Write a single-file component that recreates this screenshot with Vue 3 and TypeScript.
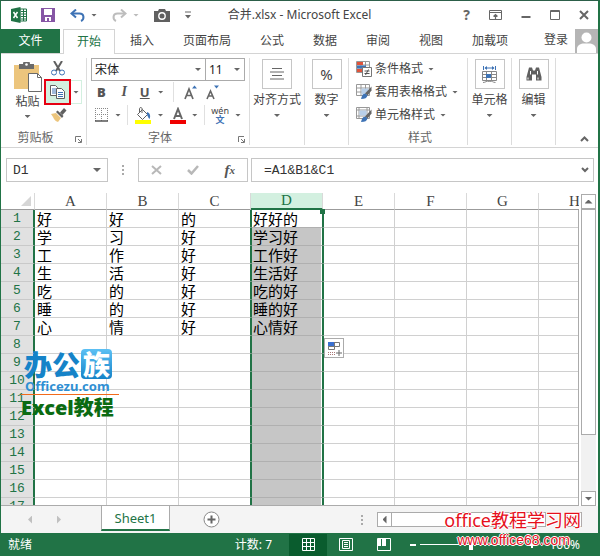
<script setup lang="ts">
import { ref } from 'vue'

const tabs = ['开始', '插入', '页面布局', '公式', '数据', '审阅', '视图', '加载项']
const activeTab = ref('开始')

const columns = ['A', 'B', 'C', 'D', 'E', 'F', 'G', 'H']
const selected = 3
const rows: string[][] = [
  ['好', '好', '的', '好好的'],
  ['学', '习', '好', '学习好'],
  ['工', '作', '好', '工作好'],
  ['生', '活', '好', '生活好'],
  ['吃', '的', '好', '吃的好'],
  ['睡', '的', '好', '睡的好'],
  ['心', '情', '好', '心情好'],
]
const rowCount = 17

const cell = (r: number, c: number): string => rows[r - 1]?.[c] ?? ''

const columnClass = (c: number) => ({
  before: c === selected - 1,
  sel: c === selected,
  after: c === selected + 1,
})

const formula = ref('=A1&B1&C1')
const cellName = ref('D1')
const zoom = ref(50)
</script>

<template>
  <div class="window">
    <header class="titlebar">
      <div class="quick">
        <svg class="logo" width="16" height="16" viewBox="0 0 16 16">
          <path d="M9 2h6.500v12H9z" fill="#fff" stroke="#217346" />
          <path d="M10 4.500h5M10 7h5M10 9.500h5M10 12h5M12.500 2v12" stroke="#217346" />
          <path d="M0 2l9.500-2v16L0 14z" fill="#217346" />
          <path d="M2.500 5l4 6M6.500 5l-4 6" stroke="#fff" stroke-width="1.500" />
        </svg>
        <button class="plain save" aria-label="保存">
          <svg width="14" height="14" viewBox="0 0 14 14">
            <path d="M0 0h14v14H0z" fill="#8656a5" />
            <path d="M3 1h8v6H3zM4 9h6v4H8v-3H6v3H4z" fill="#fff" />
          </svg>
        </button>
        <button class="plain undo" aria-label="撤消">
          <svg width="15" height="13" viewBox="0 0 15 13">
            <path d="M2 4.500h7.500c5 0 5 6 1.500 7.500" fill="none" stroke="#3e73b5" stroke-width="2" />
            <path d="M6 0.500L1.500 4.500 6 8.500" fill="none" stroke="#3e73b5" stroke-width="2" />
          </svg>
          <i class="caret"></i>
        </button>
        <button class="plain redo" aria-label="恢复">
          <svg width="15" height="13" viewBox="0 0 15 13">
            <path d="M13 4.500H5.500c-5 0-5 6-1.500 7.500" fill="none" stroke="#bdbdbd" stroke-width="2" />
            <path d="M9 0.500l4.500 4L9 8.500" fill="none" stroke="#bdbdbd" stroke-width="2" />
          </svg>
          <i class="caret pale"></i>
        </button>
        <button class="plain" aria-label="照相机">
          <svg width="16" height="13" viewBox="0 0 16 13">
            <path d="M0 2h4l1-2h6l1 2h4v11H0z" fill="#606060" />
            <circle cx="8" cy="7" r="3.200" fill="none" stroke="#fff" stroke-width="1.400" />
          </svg>
        </button>
        <button class="plain" aria-label="自定义快速访问工具栏">
          <svg width="6" height="8" viewBox="0 0 6 8">
            <path d="M0 1h6" stroke="#666" stroke-width="1" />
            <path d="M0 4h6L3 7.500z" fill="#666" />
          </svg>
        </button>
      </div>
      <h1>合并.xlsx - Microsoft Excel</h1>
      <div class="controls">
        <button class="plain help" aria-label="帮助">?</button>
        <button class="plain" aria-label="功能区显示选项">
          <svg width="13" height="10" viewBox="0 0 13 10">
            <path d="M0.500 0.500h12v9H0.500zM0.500 2.500h12" fill="none" stroke="#666" />
            <path d="M6.500 9V4.500M4.500 6.500l2-2 2 2" fill="none" stroke="#666" stroke-width="1.200" />
          </svg>
        </button>
        <button class="plain" aria-label="最小化">
          <svg width="10" height="10" viewBox="0 0 10 10"><path d="M0.500 7h9" stroke="#666" stroke-width="2" /></svg>
        </button>
        <button class="plain" aria-label="最大化">
          <svg width="10" height="10" viewBox="0 0 10 10"><path d="M0.500 0.500h9v9h-9zM0.500 1.500h9" fill="none" stroke="#666" /></svg>
        </button>
        <button class="plain" aria-label="关闭">
          <svg width="10" height="10" viewBox="0 0 10 10"><path d="M1 1l8 8M9 1L1 9" stroke="#666" stroke-width="2" /></svg>
        </button>
      </div>
    </header>

    <nav class="tabs">
      <button class="tab file">文件</button>
      <button
        v-for="t in tabs"
        :key="t"
        class="tab"
        :class="{ active: t === activeTab }"
        @click="activeTab = t"
      >{{ t }}</button>
      <button class="tab login">登录</button>
      <svg class="avatar" width="23" height="24" viewBox="0 0 23 24">
        <path d="M0 0h23v24H0z" fill="#b5b5b5" />
        <circle cx="11.500" cy="8.500" r="5" fill="#fff" />
        <path d="M2 24v-4c0-4 4-5.500 7-5.500h5c3 0 7 1.500 7 5.500v4z" fill="#fff" />
      </svg>
    </nav>

    <section class="ribbon">
      <div class="group clipboard">
        <div class="body">
          <button class="paste">
            <svg width="28" height="30" viewBox="0 0 28 30">
              <path d="M0 3h25v24H0z" fill="#ecc57d" />
              <path d="M5 2h4a3.500 3.500 0 0 1 7 0h4v5H5z" fill="#6a6a6a" />
              <circle cx="12.500" cy="2.500" r="1.300" fill="#fff" />
              <path d="M14.500 11.500h9l4 4v14h-13z" fill="#fff" stroke="#6a6a6a" />
              <path d="M23.500 11.500v4h4" fill="none" stroke="#6a6a6a" />
            </svg>
            <span>粘贴</span>
            <i class="caret"></i>
          </button>
          <div class="clip-tools">
            <button class="plain" aria-label="剪切">
              <svg width="14" height="15" viewBox="0 0 14 15">
                <path d="M3 0l6 10M11 0L5 10" stroke="#606060" stroke-width="2" />
                <circle cx="3" cy="11.500" r="2.500" fill="#fff" stroke="#3e73b5" />
                <circle cx="11" cy="11.500" r="2.500" fill="#fff" stroke="#3e73b5" />
              </svg>
            </button>
            <div class="copy-row">
              <button class="copy" aria-label="复制">
                <svg width="15" height="14" viewBox="0 0 15 14">
                  <path d="M0.500 0.500h5l2 2v8h-7z" fill="#fff" stroke="#606060" />
                  <path d="M2 4h4M2 6h4M2 8h4" stroke="#3e73b5" />
                  <path d="M6.500 3.500h5l3 3v7h-8z" fill="#fff" stroke="#606060" />
                  <path d="M8 7.500h5M8 9.500h5M8 11.500h5" stroke="#3e73b5" />
                </svg>
              </button>
              <button class="copy-more" aria-label="复制选项"><i class="caret"></i></button>
            </div>
            <button class="plain" aria-label="格式刷">
              <svg width="16" height="14" viewBox="0 0 16 14">
                <path d="M0 6l5-1 5 5-3 4c-3-1-3-2-4-3l-1-2z" fill="#ecc57d" />
                <path d="M5 4l6 6 1.500-2-6-5.500z" fill="#606060" />
                <path d="M9 4.500L13 0l2.500 2.500L11.500 7z" fill="#606060" />
              </svg>
            </button>
          </div>
        </div>
        <footer>剪贴板<svg class="launch" width="7" height="7" viewBox="0 0 7 7"><path d="M0.500 6V0.500H6M3 3l3 3M6.500 3v3.500H3" fill="none" stroke="#777" /></svg></footer>
      </div>

      <div class="group font">
        <div class="body">
          <div class="combos">
            <label class="combo family">
              <select aria-label="字体"><option>宋体</option></select><i class="caret"></i>
            </label>
            <label class="combo size">
              <select aria-label="字号"><option>11</option></select><i class="caret"></i>
            </label>
          </div>
          <div class="tools">
            <button class="plain letter" aria-label="加粗"><b>B</b></button>
            <button class="plain letter" aria-label="倾斜"><em>I</em></button>
            <button class="plain letter" aria-label="下划线"><u>U</u><i class="caret"></i></button>
            <span class="rule"></span>
            <button class="plain" aria-label="增大字号">
              <svg width="13" height="15" viewBox="0 0 13 15">
                <path d="M1 14L5 4l4 10M2.500 10.500h5" fill="none" stroke="#666" stroke-width="1.700" />
                <path d="M8 3.500L10.500 0.500 13 3.500z" fill="#3e73b5" />
              </svg>
            </button>
            <button class="plain" aria-label="减小字号">
              <svg width="13" height="15" viewBox="0 0 13 15">
                <path d="M1 14l3.500-8L8 14M2.500 11h4" fill="none" stroke="#666" stroke-width="1.600" />
                <path d="M8 0.500L10.500 3.500 13 0.500z" fill="#3e73b5" />
              </svg>
            </button>
          </div>
          <div class="tools second">
            <button class="plain" aria-label="边框">
              <svg width="14" height="14" viewBox="0 0 14 14">
                <path d="M0.500 0v13M6.500 0v13M12.500 0v13M0 0.500h13M0 6.500h13" stroke="#888" stroke-dasharray="1 1" />
                <path d="M0 13h13" stroke="#555" stroke-width="1.500" />
              </svg><i class="caret"></i>
            </button>
            <span class="rule"></span>
            <button class="plain" aria-label="填充颜色">
              <svg width="17" height="17" viewBox="0 0 17 17">
                <path d="M7.500 2.500l5 5-5 5-5-5zM7 6V1.500a1.300 1.300 0 0 0-2.500 0V5" fill="#fff" stroke="#606060" />
                <path d="M12 5c3 1 4 4 2.500 7-1.500-1-1.500-3-2.500-4z" fill="#3e73b5" />
                <path d="M0 13h16v4H0z" fill="#ffff00" />
              </svg><i class="caret"></i>
            </button>
            <button class="plain" aria-label="字体颜色">
              <svg width="16" height="17" viewBox="0 0 16 17">
                <path d="M4 12L8 2l4 10M5.500 9h5" fill="none" stroke="#666" stroke-width="2" />
                <path d="M0 13h16v4H0z" fill="#f00000" />
              </svg><i class="caret"></i>
            </button>
            <span class="rule"></span>
            <button class="plain" aria-label="拼音"><span class="pinyin">wén<b>文</b></span><i class="caret"></i></button>
          </div>
        </div>
        <footer>字体<svg class="launch" width="7" height="7" viewBox="0 0 7 7"><path d="M0.500 6V0.500H6M3 3l3 3M6.500 3v3.500H3" fill="none" stroke="#777" /></svg></footer>
      </div>

      <div class="group big align">
        <button class="large">
          <span class="frame">
            <svg width="14" height="12" viewBox="0 0 14 12"><path d="M2 0.500h10M0 4h14M2 7.500h10M0 11h14" stroke="#666" /></svg>
          </span>
          <span>对齐方式</span><i class="caret"></i>
        </button>
      </div>
      <div class="group big number">
        <button class="large"><span class="frame percent">%</span><span>数字</span><i class="caret"></i></button>
      </div>

      <div class="group styles">
        <div class="body">
          <button class="wide">
            <svg width="16" height="16" viewBox="0 0 16 16">
              <path d="M0.500 0.500h13v11H0.500zM0.500 4h13M0.500 8h13M5 0.500v11M9.500 0.500v11" fill="#fff" stroke="#999" />
              <path d="M1 1h6v3H1zM1 8h5v3H1z" fill="#e0533a" /><path d="M1 4.500h9v3H1z" fill="#3e73b5" />
              <path d="M6.500 6.500h9v9h-9z" fill="#fff" stroke="#777" />
              <path d="M8.500 10h5M8.500 12.500h5M12.500 8.500l-3 5.500" stroke="#555" />
            </svg>条件格式<i class="caret"></i>
          </button>
          <button class="wide">
            <svg width="16" height="16" viewBox="0 0 16 16">
              <path d="M0.500 0.500h13v11H0.500zM0.500 4h13M0.500 8h13M5 0.500v11M9.500 0.500v11" fill="#fff" stroke="#999" />
              <path d="M5.500 4.500h7v6h-7z" fill="#b9d0ea" />
              <path d="M15.500 2.500v4l-4 5-2.500-2z" fill="#666" /><path d="M5 15c1-5 3-6 5-5l1.500 1.500C11 14 9 15 5 15z" fill="#3e73b5" />
            </svg>套用表格格式<i class="caret"></i>
          </button>
          <button class="wide">
            <svg width="16" height="16" viewBox="0 0 16 16">
              <path d="M0.500 0.500h13v11H0.500zM0.500 3h13M0.500 9h13M3 0.500v11M11 0.500v11" fill="#fff" stroke="#999" />
              <path d="M3.500 3.500h7v5h-7z" fill="#b9d0ea" />
              <path d="M15.500 2.500v4l-4 5-2.500-2z" fill="#666" /><path d="M5 15c1-5 3-6 5-5l1.500 1.500C11 14 9 15 5 15z" fill="#3e73b5" />
            </svg>单元格样式<i class="caret"></i>
          </button>
        </div>
        <footer>样式</footer>
      </div>

      <div class="group big cells">
        <button class="large">
          <span class="frame">
            <svg width="16" height="17" viewBox="0 0 16 17">
              <path d="M1.500 0v4M13.500 0v4M3 2h9" stroke="#3e73b5" /><path d="M5 0L2.500 2 5 4zM10 0l2.500 2L10 4z" fill="#3e73b5" />
              <path d="M0.500 5.500h14v9H0.500zM0.500 8.500h14M0.500 11.500h14M4.500 5.500v9M9.500 5.500v9" fill="#fff" stroke="#888" />
              <path d="M4 8h5v4H4z" fill="#3e73b5" /><path d="M1 16.500c3 0 3-2 6.500-1 3-1 3 1 6 1" fill="none" stroke="#888" />
            </svg>
          </span>
          <span>单元格</span><i class="caret"></i>
        </button>
      </div>
      <div class="group big edit">
        <button class="large">
          <span class="frame">
            <svg width="16" height="14" viewBox="0 0 16 14">
              <path d="M3 0.500h3l1 3h2l1-3h3l2.500 9.500v3.500h-5.500V7.500H6v6H0.500V10z" fill="#606060" />
              <path d="M2 10.500v2M4.500 4v3.500M11.500 4v3.500M12 10.500v2" stroke="#fff" />
            </svg>
          </span>
          <span>编辑</span><i class="caret"></i>
        </button>
      </div>
      <button class="plain collapse" aria-label="折叠功能区">
        <svg width="9" height="6" viewBox="0 0 9 6"><path d="M1 5l3.500-3.500L8 5" fill="none" stroke="#666" stroke-width="2" /></svg>
      </button>
    </section>

    <section class="formula-bar">
      <label class="box name"><input v-model="cellName" aria-label="名称框" /><i class="caret wide-caret"></i></label>
      <span class="dots"><i></i><i></i><i></i></span>
      <div class="box actions">
        <button class="plain" aria-label="取消"><svg width="11" height="10" viewBox="0 0 11 10"><path d="M1 1l9 8M10 1L1 9" stroke="#b8b8b8" stroke-width="2" /></svg></button>
        <button class="plain" aria-label="输入"><svg width="12" height="10" viewBox="0 0 12 10"><path d="M1 5l3.500 3.500L11 1" fill="none" stroke="#b8b8b8" stroke-width="2.500" /></svg></button>
        <button class="plain fx" aria-label="插入函数">f<sub>x</sub></button>
      </div>
      <div class="box entry">
        <input v-model="formula" aria-label="编辑栏" />
        <button class="plain" aria-label="展开编辑栏"><svg width="8" height="6" viewBox="0 0 8 6"><path d="M1 1l3 3 3-3" fill="none" stroke="#666" stroke-width="2" /></svg></button>
      </div>
    </section>

    <main class="sheet">
      <div class="grid">
        <table>
          <colgroup><col class="row-col" /><col v-for="c in columns" :key="c" class="data-col" /></colgroup>
          <thead>
            <tr>
              <th class="corner"><svg width="10" height="10" viewBox="0 0 10 10"><path d="M10 0v10H0z" fill="#d6d6d6" /></svg></th>
              <th v-for="(c, i) in columns" :key="c" :class="{ sel: i === selected }">{{ c }}</th>
            </tr>
          </thead>
          <tbody>
            <tr v-for="r in rowCount" :key="r">
              <th>{{ r }}</th>
              <td v-for="(c, i) in columns" :key="c" :class="columnClass(i)">{{ cell(r, i) }}</td>
            </tr>
          </tbody>
        </table>
        <span class="handle"></span>
        <button class="fill-options" aria-label="自动填充选项">
          <svg width="15" height="15" viewBox="0 0 15 15">
            <path d="M1.500 1.500h11v4h-11zM1.500 5.500h6v3h-6zM7.500 1.500v4" fill="#fff" stroke="#777" />
            <path d="M1 1h6v4H1z" fill="#3a6fd0" />
            <path d="M1 11.500h7M1 13.500h7" stroke="#a77" stroke-dasharray="1 1" />
            <path d="M12 9v6M9 12h6" stroke="#666" />
          </svg>
        </button>
        <aside class="mark">
          <div class="mark-name">办公<span>族</span></div>
          <div class="mark-site">Officezu.com</div>
          <div class="mark-course">Excel教程</div>
        </aside>
      </div>
      <div class="vscroll">
        <button aria-label="向上滚动"><i class="tri up"></i></button>
        <div class="vthumb"></div>
        <div class="vrest"></div>
        <button aria-label="向下滚动"><i class="tri down"></i></button>
      </div>
    </main>

    <section class="sheet-bar">
      <button class="plain" aria-label="上一工作表"><i class="tri left pale"></i></button>
      <button class="plain next" aria-label="下一工作表"><i class="tri right pale"></i></button>
      <button class="sheet-tab">Sheet1</button>
      <button class="plain add" aria-label="新工作表">
        <svg width="17" height="17" viewBox="0 0 17 17">
          <circle cx="8.500" cy="8.500" r="7.500" fill="#fff" stroke="#888" /><path d="M8.500 4.500v8M4.500 8.500h8" stroke="#666" stroke-width="2" />
        </svg>
      </button>
      <span class="dots"><i></i><i></i><i></i></span>
      <div class="hscroll">
        <button aria-label="向左滚动"><i class="tri left"></i></button>
        <div class="hthumb"></div>
        <div class="hrest"></div>
        <button aria-label="向右滚动"><i class="tri right"></i></button>
      </div>
    </section>

    <footer class="status">
      <span>就绪</span>
      <span class="count">计数: 7</span>
      <button class="view on" aria-label="普通">
        <svg width="13" height="13" viewBox="0 0 13 13"><path d="M0.500 0.500h12v12H0.500zM0.500 4.500h12M0.500 8.500h12M4.500 0.500v12M8.500 0.500v12" fill="none" stroke="#fff" /></svg>
      </button>
      <button class="view" aria-label="页面布局">
        <svg width="14" height="13" viewBox="0 0 14 13"><path d="M0.500 0.500h13v12H0.500zM3.500 2.500h7v8h-7zM5 4.500h4M5 6.500h4M5 8.500h4" fill="none" stroke="#fff" /></svg>
      </button>
      <button class="view" aria-label="分页预览">
        <svg width="14" height="13" viewBox="0 0 14 13"><path d="M0.500 0.500h13v12H0.500z" fill="none" stroke="#fff" /><path d="M1 1h3v7H1zM5 1h4v7H5z" fill="#fff" /></svg>
      </button>
      <button class="step" aria-label="缩小"><svg width="8" height="8" viewBox="0 0 8 8"><path d="M1 4h6" stroke="#fff" stroke-width="2" /></svg></button>
      <input v-model="zoom" class="zoom" type="range" min="0" max="100" aria-label="显示比例" />
      <button class="step" aria-label="放大"><svg width="8" height="8" viewBox="0 0 8 8"><path d="M1 4h6M4 1v6" stroke="#fff" stroke-width="2" /></svg></button>
      <span class="level">100%</span>
    </footer>

    <aside class="site">
      <div class="site-name">office教程学习网</div>
      <div class="site-url">www.office68.com</div>
    </aside>
  </div>
</template>

<style>
body {
  margin: 0;
}
</style>

<style scoped>
.window {
  position: relative;
  display: flex;
  flex-direction: column;
  box-sizing: border-box;
  height: 100vh;
  border: 1px solid #217346;
  border-top-color: #2c5f49;
  border-right-width: 2px;
  border-bottom: 0;
  background: #fff;
  color: #444;
  font: 12px/16px "Noto Sans", "Noto Sans CJK SC", sans-serif;
  overflow: hidden;
}
.window *,
.window *::before,
.window *::after {
  box-sizing: border-box;
}
button,
input,
select {
  margin: 0;
  padding: 0;
  border: 0;
  background: none;
  color: inherit;
  font: inherit;
}
svg {
  display: block;
  flex: none;
}
.plain {
  display: flex;
  align-items: center;
}
.caret {
  flex: none;
  width: 6px;
  height: 3px;
  background: #666;
  clip-path: polygon(0 0, 100% 0, 50% 100%);
}
.caret.pale {
  background: #bbb;
}
.caret.wide-caret {
  width: 8px;
  height: 4px;
}

/* title bar */
.titlebar {
  display: grid;
  grid-template-columns: 1fr auto 1fr;
  align-items: center;
  height: 28px;
  flex: none;
}
.quick {
  display: flex;
  align-items: center;
  padding-left: 10px;
  gap: 15px;
}
.logo {
  margin-right: -1px;
}
.undo,
.redo {
  gap: 6px;
}
h1 {
  margin: 0;
  font-size: 12px;
  font-weight: 400;
}
.controls {
  display: flex;
  align-items: center;
  justify-content: flex-end;
  gap: 19px;
  padding-right: 9px;
}
.help {
  color: #666;
  font-weight: 700;
  font-size: 14px;
}

/* tabs */
.tabs {
  display: flex;
  gap: 1px;
  height: 25px;
  flex: none;
  border-bottom: 1px solid #d4d4d4;
}
.tab {
  height: 24px;
  padding: 0 14px;
}
.tab.file {
  width: 59px;
  margin-right: 2px;
  background: #217346;
  color: #fff;
}
.tab.active {
  height: 25px;
  padding: 0 13px;
  border: 1px solid #d4d4d4;
  border-bottom: 0;
  background: #fff;
  color: #217346;
}
.tab.login {
  margin-left: auto;
  padding: 0 6px 2px;
}

/* ribbon */
.ribbon {
  display: flex;
  height: 94px;
  flex: none;
  padding: 4px 0 2px;
  border-bottom: 1px solid #d4d4d4;
}
.group {
  display: flex;
  flex-direction: column;
  justify-content: space-between;
  border-right: 1px solid #dcdcdc;
}
.group .body {
  height: 72px;
}
.group footer {
  position: relative;
  color: #666;
  text-align: center;
  height: 15px;
  line-height: 15px;
}
.launch {
  position: absolute;
  right: 4px;
  bottom: 2px;
}
.clipboard {
  width: 86px;
}
.clipboard .body {
  display: flex;
  gap: 2px;
  padding-left: 12px;
}
.clipboard footer {
  padding-right: 16px;
}
.paste {
  display: flex;
  flex-direction: column;
  align-items: center;
  width: 29px;
  padding-top: 4px;
}
.paste span {
  padding-top: 2px;
  white-space: nowrap;
}
.paste .caret {
  margin-top: 5px;
}
.clip-tools {
  display: flex;
  flex-direction: column;
  gap: 3px;
  padding-top: 3px;
}
.clip-tools > .plain {
  margin-left: 7px;
}
.copy-row {
  display: flex;
}
.copy {
  display: flex;
  align-items: center;
  justify-content: center;
  width: 27px;
  height: 26px;
  border: 2px solid #e60012;
  background: #d3f0e0;
}
.copy-more {
  display: flex;
  align-items: center;
  width: 11px;
  margin: 1px 0;
  padding-left: 2px;
  border: 1px solid #d3f0e0;
  border-left: 0;
}
.font {
  width: 163px;
}
.font .body {
  padding-left: 4px;
}
.font footer {
  padding-right: 16px;
}
.combos {
  display: flex;
}
.combo {
  display: flex;
  align-items: center;
  height: 23px;
  border: 1px solid #ababab;
  color: #222;
}
.combo.family {
  width: 115px;
}
.combo.size {
  width: 40px;
  margin-left: -1px;
}
.combo select {
  appearance: none;
  flex: 1;
  min-width: 0;
  height: 100%;
  padding-left: 3px;
}
.combo .caret {
  margin-right: 4px;
}
.tools {
  display: flex;
  align-items: center;
  justify-content: space-between;
  height: 22px;
  padding: 0 30px 0 6px;
}
.tools .plain {
  gap: 6px;
}
.tools .letter {
  gap: 8px;
  min-width: 12px;
  color: #555;
  font-size: 13px;
  font-weight: 700;
}
.tools.second {
  height: 24px;
  padding: 0 8px 0 4px;
}
.rule {
  width: 1px;
  height: 20px;
  background: #e0e0e0;
}
.letter em {
  padding-left: 3px;
  font-family: "Liberation Serif", serif;
  font-size: 14px;
}
.pinyin {
  display: flex;
  flex-direction: column;
  align-items: center;
  font-size: 9px;
  line-height: 9px;
}
.pinyin b {
  color: #3e73b5;
}
.big.align {
  width: 55px;
}
.big {
  width: 44px;
}
.large {
  display: flex;
  flex-direction: column;
  align-items: center;
  padding-top: 1px;
  white-space: nowrap;
}
.frame {
  display: flex;
  align-items: center;
  justify-content: center;
  width: 30px;
  height: 30px;
  margin-bottom: 3px;
  border: 1px solid #c6c6c6;
}
.percent {
  font-size: 15px;
}
.large .caret {
  margin-top: 6px;
}
.styles {
  width: 119px;
}
.styles .body {
  display: flex;
  flex-direction: column;
  gap: 7px;
  padding: 3px 0 0 7px;
}
.styles footer {
  padding-left: 24px;
}
.wide {
  display: flex;
  align-items: center;
  height: 16px;
  white-space: nowrap;
}
.wide svg {
  margin-right: 3px;
}
.wide .caret {
  margin-left: 5px;
}
.collapse {
  align-self: flex-end;
  margin: 0 9px 3px auto;
}

/* formula bar */
.formula-bar {
  display: flex;
  flex: none;
  padding: 10px 4px 11px 5px;
  color: #333;
}
.box {
  display: flex;
  align-items: center;
  height: 24px;
  border: 1px solid #c6c6c6;
}
.box input {
  flex: 1;
  min-width: 0;
  padding-top: 2px;
  font: 13px/16px "Liberation Mono", monospace;
}
.name {
  width: 102px;
  padding: 0 6px;
}
.dots {
  display: flex;
  flex-direction: column;
  justify-content: center;
  gap: 2px;
  width: 30px;
  align-items: center;
}
.dots i {
  width: 2px;
  height: 2px;
  background: #aaa;
}
.actions {
  width: 110px;
  margin-right: 3px;
  padding: 0 12px;
  justify-content: space-between;
}
.fx {
  color: #555;
  font: italic 700 15px/16px "Liberation Serif", serif;
}
.fx sub {
  font-size: 11px;
  vertical-align: baseline;
}
.entry {
  flex: 1;
  padding: 0 4px 0 12px;
}

/* worksheet */
.sheet {
  display: flex;
  flex: 1;
  min-height: 0;
  gap: 2px;
  padding-right: 2px;
}
.grid {
  position: relative;
  flex: 1;
  min-width: 0;
  overflow: hidden;
  border-bottom: 1px solid #ababab;
}
.grid::after {
  content: "";
  position: absolute;
  top: 17px;
  right: 0;
  bottom: 0;
  width: 1px;
  background: #ababab;
}
table {
  table-layout: fixed;
  width: 610px;
  border-collapse: separate;
  border-spacing: 0;
}
.row-col {
  width: 34px;
}
.data-col {
  width: 72px;
}
th,
td {
  padding: 0;
  white-space: nowrap;
}
thead th {
  height: 17px;
  border-right: 1px solid #d9d9d9;
  border-bottom: 1px solid #9b9b9b;
  font: 15px/16px "Liberation Serif", serif;
  color: #444;
}
thead th.corner {
  padding: 0 3px 1px 20px;
}
thead th.sel {
  border-bottom: 2px solid #217346;
  background: #d3f0e0;
  color: #217346;
  line-height: 15px;
}
tbody th {
  height: 18px;
  border-right: 2px solid #217346;
  border-bottom: 1px solid #c9c9c9;
  background: #e1e1e1;
  color: #217346;
  font: 13px/17px "Liberation Mono", monospace;
}
td {
  height: 18px;
  padding-left: 2px;
  border-right: 1px solid #d0d0d0;
  border-bottom: 1px solid #d0d0d0;
  color: #000;
  font: 15px/17px "Noto Sans CJK SC", sans-serif;
}
td.before {
  border-right-color: #217346;
}
td.sel {
  padding-left: 1px;
  border-left: 1px solid #217346;
  border-right-color: #217346;
  border-bottom-color: #b0b0b0;
  background: #c6c6c6;
  box-shadow: inset -1px 0 #fff;
}
tr:first-child td.sel {
  background: #fff;
}
td.after {
  border-left: 1px solid #217346;
}
.handle {
  position: absolute;
  left: 319px;
  top: 16px;
  width: 5px;
  height: 5px;
  background: #217346;
}
.fill-options {
  position: absolute;
  left: 323px;
  top: 145px;
  display: flex;
  align-items: center;
  justify-content: center;
  width: 20px;
  height: 20px;
  border: 1px solid #ababab;
  background: #fff;
}
.mark {
  position: absolute;
  left: 20px;
  top: 156px;
  width: 98px;
}
.mark-name {
  display: flex;
  gap: 1px;
  padding-left: 3px;
  color: #1583c8;
  font: 900 28px/30px "Noto Sans CJK SC", sans-serif;
}
.mark-name span {
  width: 31px;
  border-radius: 4px;
  background: linear-gradient(#5cc0f4, #1583c8);
  color: #fff;
  font-size: 27px;
  text-align: center;
}
.mark-site {
  padding-left: 4px;
  border-bottom: 1px solid #f26a1b;
  color: #2f8fd3;
  font: 700 13px/15px "Noto Sans", sans-serif;
}
.mark-course {
  color: #0b6b12;
  font: 900 20px/25px "Noto Sans", "Noto Sans CJK SC", sans-serif;
  white-space: nowrap;
}
.vscroll {
  display: flex;
  flex-direction: column;
  width: 15px;
  padding-top: 1px;
}
.vscroll button,
.hscroll button {
  display: flex;
  flex: none;
  align-items: center;
  justify-content: center;
  width: 15px;
  height: 15px;
  border: 1px solid #ababab;
  background: #fff;
}
.vthumb {
  flex: 80;
  border: 1px solid #ababab;
}
.vrest {
  flex: 20;
  background: #f1f1f1;
}
.tri {
  width: 8px;
  height: 4px;
  background: #666;
}
.tri.up {
  clip-path: polygon(50% 0, 100% 100%, 0 100%);
}
.tri.down {
  clip-path: polygon(0 0, 100% 0, 50% 100%);
}
.tri.left {
  width: 4px;
  height: 8px;
  clip-path: polygon(100% 0, 100% 100%, 0 50%);
}
.tri.right {
  width: 4px;
  height: 8px;
  clip-path: polygon(0 0, 100% 50%, 0 100%);
}
.tri.pale {
  background: #c0c0c0;
}

/* sheet tabs */
.sheet-bar {
  display: flex;
  align-items: center;
  flex: none;
  height: 27px;
  padding: 0 16px 0 27px;
  background: #f4f4f4;
}
.next {
  margin-left: 25px;
}
.sheet-tab {
  align-self: flex-start;
  width: 69px;
  height: 25px;
  margin-left: 40px;
  border: 1px solid #ababab;
  border-top: 0;
  border-bottom: 2px solid #217346;
  background: #fff;
  color: #217346;
  font-size: 13px;
}
.add {
  margin-left: 33px;
}
.sheet-bar .dots {
  margin-left: auto;
}
.hscroll {
  display: flex;
  width: 205px;
}
.hthumb {
  flex: 88;
  margin-left: -1px;
  border: 1px solid #ababab;
  background: #fff;
}
.hrest {
  flex: 12;
}

/* status bar */
.status {
  display: flex;
  align-items: center;
  flex: none;
  height: 23px;
  padding: 0 18px 0 7px;
  background: #217346;
  color: #fff;
}
.count {
  margin-left: auto;
  margin-right: 17px;
}
.view {
  display: flex;
  align-items: center;
  justify-content: center;
  width: 38px;
  height: 22px;
}
.view.on {
  background: #0a5c2e;
}
.step {
  margin: 0 3px 0 6px;
}
.zoom {
  appearance: none;
  width: 102px;
  height: 12px;
  background: linear-gradient(#fff, #fff) center / 100% 1px no-repeat;
}
.zoom::-webkit-slider-thumb {
  appearance: none;
  width: 4px;
  height: 11px;
  background: #fff;
}
.level {
  width: 32px;
  margin-left: 9px;
  text-align: right;
}

/* site stamp */
.site {
  position: absolute;
  right: 17px;
  bottom: 7px;
  color: #e60f1c;
  text-align: right;
  text-shadow: 1px 0 #fff, -1px 0 #fff, 0 1px #fff, 0 -1px #fff;
  white-space: nowrap;
}
.site-name {
  font: 18px/22px "Noto Sans", "Noto Sans CJK SC", sans-serif;
}
.site-url {
  padding-right: 11px;
  font: 14px/18px "Liberation Sans", sans-serif;
}
</style>
